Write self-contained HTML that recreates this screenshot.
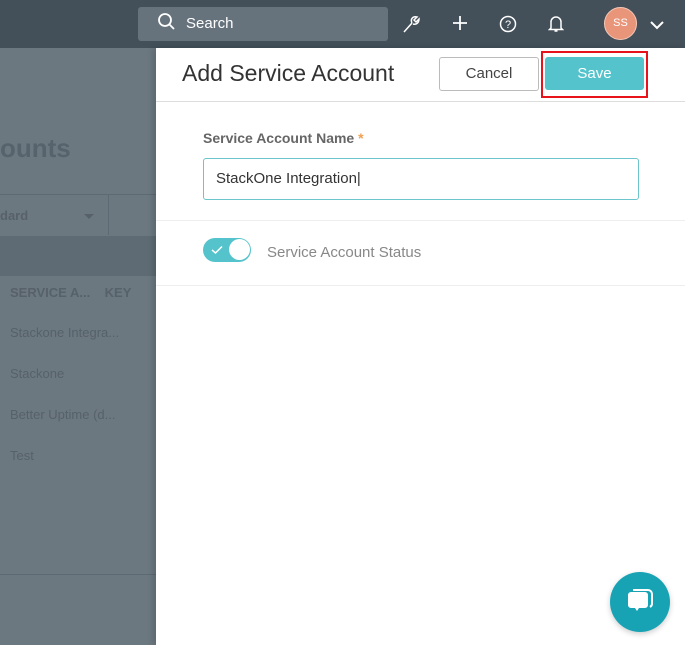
<!DOCTYPE html>
<html><head><style>
*{box-sizing:border-box;margin:0;padding:0}
body{width:685px;height:645px;overflow:hidden;position:relative;font-family:"Liberation Sans",sans-serif;background:#6c7880}
.top{position:absolute;left:0;top:0;width:685px;height:48px;background:#434f59}
.search{position:absolute;left:138px;top:7px;width:250px;height:34px;background:#66737d;border-radius:3px;color:#fff;font-size:15px;line-height:34px;padding-left:48px}
.ic{position:absolute;top:13px}
.av{position:absolute;left:604px;top:7px;width:33px;height:33px;border-radius:50%;background:#e8957a;border:1px solid #f4c8b8;color:#fff;font-size:11px;text-align:center;line-height:31px}
.bg{position:absolute;color:#56616a;font-size:13px}
.panel{position:absolute;left:156px;top:48px;width:529px;height:597px;background:#fff;box-shadow:-3px 0 6px rgba(0,0,0,.15)}
</style></head><body>
<div class="top">
<div class="search">Search</div>
<svg class="ic" style="left:157px;top:12px" width="20" height="20" viewBox="0 0 20 20"><circle cx="8" cy="8" r="6" fill="none" stroke="#fff" stroke-width="1.8"/><line x1="12.5" y1="12.5" x2="17" y2="17" stroke="#fff" stroke-width="1.8"/></svg>
<svg class="ic" style="left:402px;top:14px" width="18" height="20" viewBox="0 0 18 20"><path d="M2 18 L10 9 M10 9 C8 5 11 2 15 3 L12 6 L14 8 L17 5 C17 9 14 11 11 10" fill="none" stroke="#fff" stroke-width="1.5"/></svg>
<svg class="ic" style="left:452px;top:15px" width="16" height="16"><path d="M8 1v14M1 8h14" stroke="#fff" stroke-width="1.8"/></svg>
<svg class="ic" style="left:499px;top:15px" width="18" height="18"><circle cx="9" cy="9" r="7.5" fill="none" stroke="#fff" stroke-width="1.5"/><text x="9" y="13" font-size="11" fill="#fff" text-anchor="middle" font-family="Liberation Sans">?</text></svg>
<svg class="ic" style="left:548px;top:14px" width="16" height="19"><path d="M3 14 V8 a5 5 0 0 1 10 0 V14 L14.5 15.5 H1.5 Z M6.5 17 h3" fill="none" stroke="#fff" stroke-width="1.5"/></svg>
<div class="av">SS</div>
<svg class="ic" style="left:650px;top:20px" width="14" height="10"><path d="M1 2 L7 8 L13 2" fill="none" stroke="#fff" stroke-width="2"/></svg>
</div>
<div class="bg" style="left:0;top:133px;font-size:26px;font-weight:bold;color:#57636c">ounts</div>
<div style="position:absolute;left:0;top:194px;width:156px;height:1px;background:#5e6a73"></div>
<div class="bg" style="left:0;top:208px;font-weight:bold">dard</div>
<div style="position:absolute;left:84px;top:214px;border:5px solid transparent;border-top-color:#56616a"></div>
<div style="position:absolute;left:108px;top:195px;width:1px;height:40px;background:#5e6a73"></div>
<div style="position:absolute;left:0;top:236px;width:156px;height:40px;background:#5e6b74"></div>
<div class="bg" style="left:10px;top:285px;font-weight:bold">SERVICE A...&nbsp;&nbsp;&nbsp;&nbsp;KEY</div>
<div class="bg" style="left:10px;top:325px">Stackone Integra...</div>
<div class="bg" style="left:10px;top:366px">Stackone</div>
<div class="bg" style="left:10px;top:407px">Better Uptime (d...</div>
<div class="bg" style="left:10px;top:448px">Test</div>
<div style="position:absolute;left:0;top:574px;width:156px;height:1px;background:#5e6a73"></div>
<div class="panel">
<div style="position:absolute;left:26px;top:12px;font-size:23px;color:#333">Add Service Account</div>
<div style="position:absolute;left:283px;top:9px;width:100px;height:34px;border:1px solid #bbb;border-radius:3px;text-align:center;line-height:32px;font-size:15px;color:#444">Cancel</div>
<div style="position:absolute;left:385px;top:3px;width:107px;height:47px;border:2px solid #e8121b"></div>
<div style="position:absolute;left:389px;top:9px;width:99px;height:33px;background:#54c3cc;border-radius:3px;text-align:center;line-height:33px;font-size:15px;color:#fff">Save</div>
<div style="position:absolute;left:0;top:53px;width:529px;height:1px;background:#ddd"></div>
<div style="position:absolute;left:47px;top:82px;font-size:14px;font-weight:bold;color:#666">Service Account Name <span style="color:#f0a050">*</span></div>
<div style="position:absolute;left:47px;top:110px;width:436px;height:42px;border:1px solid #6cc5cc;border-radius:3px;font-size:15px;line-height:40px;padding-left:12px;color:#333">StackOne Integration|</div>
<div style="position:absolute;left:0;top:172px;width:529px;height:1px;background:#eee"></div>
<div style="position:absolute;left:47px;top:190px;width:48px;height:24px;border-radius:12px;background:#54c3cc"></div>
<div style="position:absolute;left:73px;top:191px;width:21px;height:21px;border-radius:50%;background:#fff"></div>
<svg style="position:absolute;left:55px;top:197px" width="12" height="10"><path d="M1 5 L4.5 8 L11 1.5" fill="none" stroke="#fff" stroke-width="1.5"/></svg>
<div style="position:absolute;left:111px;top:196px;font-size:15px;color:#888">Service Account Status</div>
<div style="position:absolute;left:0;top:237px;width:529px;height:1px;background:#eee"></div>
</div>
<div style="position:absolute;left:610px;top:572px;width:60px;height:60px;border-radius:50%;background:#18a3b5;box-shadow:0 2px 6px rgba(0,0,0,.2)"></div>
<svg style="position:absolute;left:624px;top:586px" width="32" height="32" viewBox="0 0 32 32"><path d="M9 4 h15 a4 4 0 0 1 4 4 v10 a4 4 0 0 1 -2 3" fill="none" stroke="#fff" stroke-width="2"/><path d="M4 9 a3 3 0 0 1 3 -3 h14 a3 3 0 0 1 3 3 v10 a3 3 0 0 1 -3 3 h-6 l-2 3 l-2 -3 h-4 a3 3 0 0 1 -3 -3 z" fill="#fff"/></svg>
</body></html>
